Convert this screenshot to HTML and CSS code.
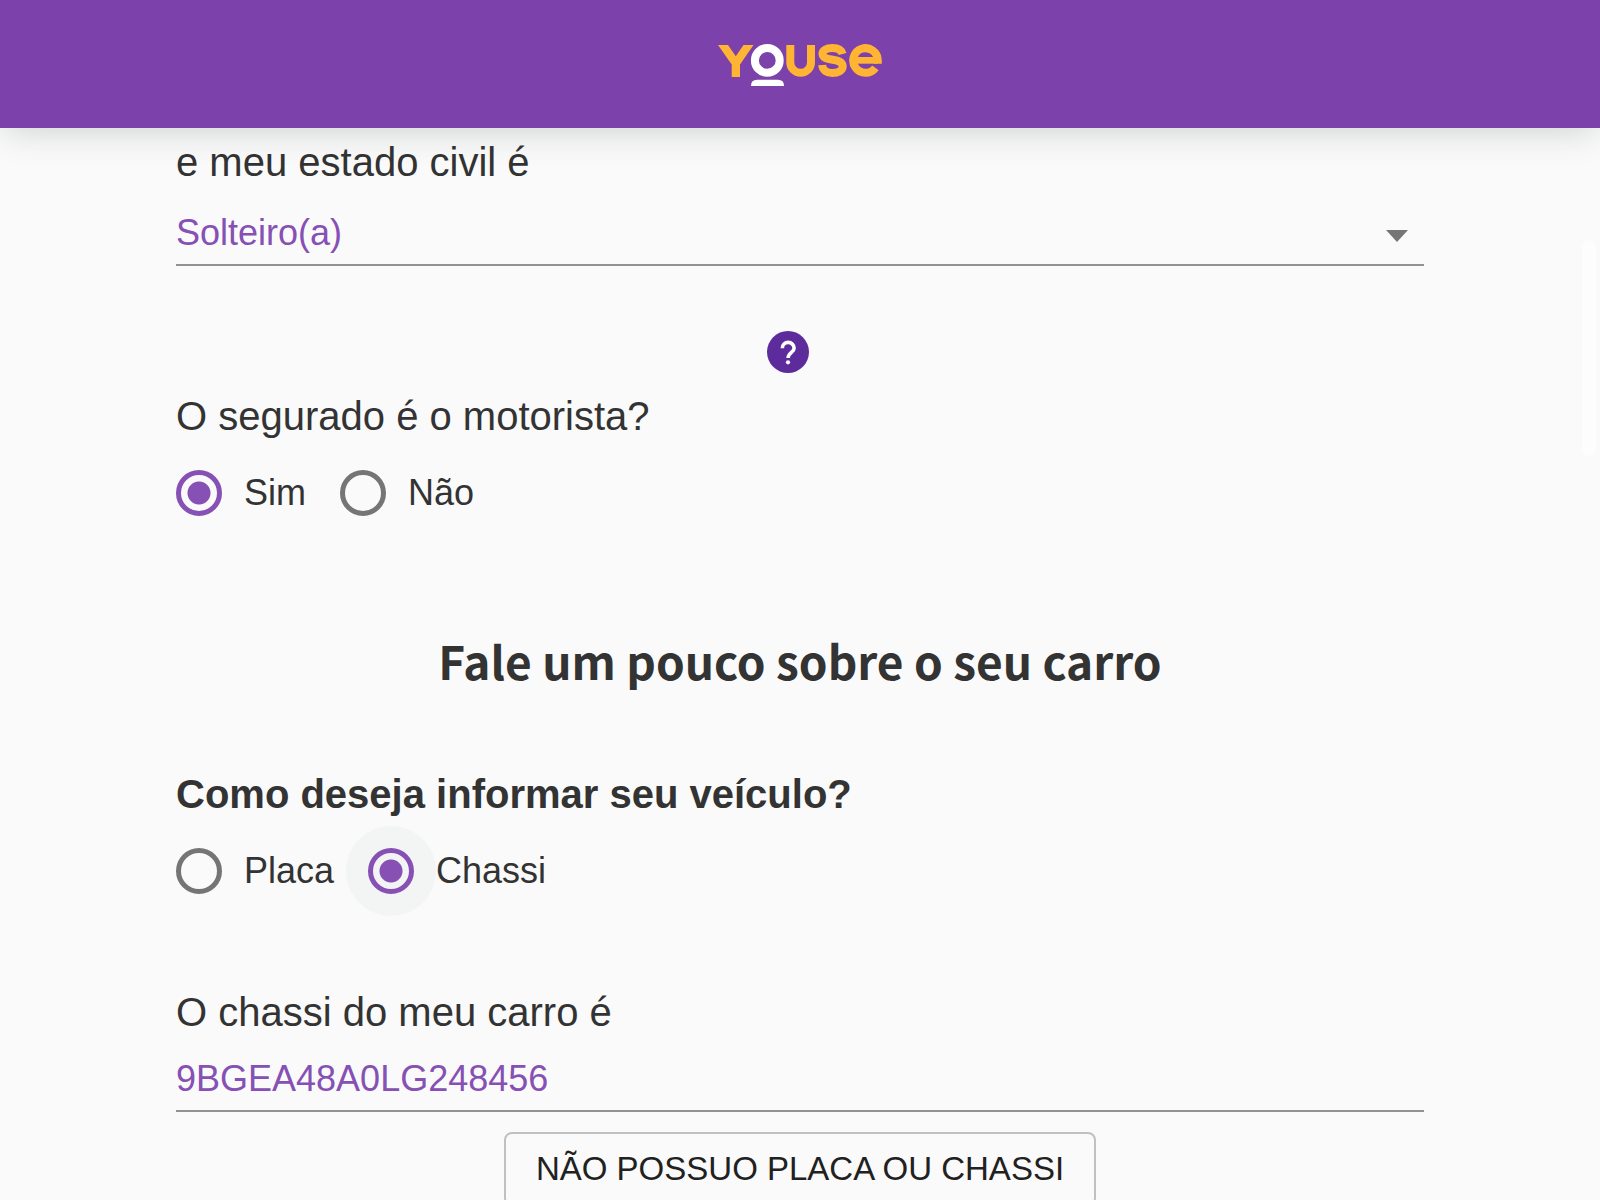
FILE: index.html
```html
<!DOCTYPE html>
<html lang="pt-BR">
<head>
<meta charset="utf-8">
<meta name="viewport" content="width=device-width, initial-scale=1">
<title>Youse</title>
<link rel="stylesheet" href="styles.css">
</head>
<body>
<div class="app">
  <header class="header">
    <svg class="logo" viewBox="0 0 164 44" role="img" aria-label="Youse">
      <path class="logo-fill" d="M0 2h10l7.8 11.2L25.5 2h10L22 21.5V34h-8.3V21.5z"/>
      <path class="logo-line" d="M72.3 2v17.4a10.35 10.35 0 0 0 20.7 0V2"/>
      <path class="logo-line" d="M124.600 11C123.500 7 119.500 5 114.500 5c-6.300 0-10 2.300-10 5.800 0 4.200 4.700 5 10.200 5.900 5.800.9 10 2.100 10 6.600 0 4.500-4.500 6.700-10.500 6.700-5.500 0-9.500-2.500-10-8"/>
      <path class="logo-line" d="M159.800 20.700V17.400A12.300 12.300 0 1 0 157.400 24.800"/>
      <path class="logo-fill" d="M138 14h22v6.700h-22z"/>
      <circle class="logo-ring" cx="49.300" cy="17.400" r="12.400"/>
      <path class="logo-base" d="M33 43q0-6.300 6-6.300h21q6 0 6 6.300z"/>
    </svg>
  </header>
  <main class="content">
    <form class="form">
      <label class="label" for="civil">e meu estado civil é</label>
      <div class="select-wrap">
        <select class="control" id="civil"><option>Solteiro(a)</option></select>
        <svg class="caret" viewBox="0 0 22 12" aria-hidden="true"><path d="M0 0h22L11 12z"/></svg>
      </div>
      <button class="help" type="button" aria-label="Ajuda">
        <svg viewBox="0 0 42 42" aria-hidden="true">
          <path d="M15.300 17.300a5.900 5.900 0 0 1 11.800 0C27.100 21.300 21.100 21.800 21.100 27"/>
          <circle cx="21" cy="31.300" r="2.100"/>
        </svg>
      </button>
      <fieldset class="group">
        <legend class="label">O segurado é o motorista?</legend>
        <div class="options">
          <label class="option"><input class="radio" type="radio" name="motorista" checked>Sim</label>
          <label class="option"><input class="radio" type="radio" name="motorista">Não</label>
        </div>
      </fieldset>
      <h2 class="title">Fale um pouco sobre o seu carro</h2>
      <fieldset class="group">
        <legend class="label label-strong">Como deseja informar seu veículo?</legend>
        <div class="options">
          <label class="option"><input class="radio" type="radio" name="veiculo">Placa</label>
          <label class="option"><input class="radio radio-active" type="radio" name="veiculo" checked>Chassi</label>
        </div>
      </fieldset>
      <div class="chassis">
        <label class="label" for="chassi">O chassi do meu carro é</label>
        <input class="control" id="chassi" type="text" value="9BGEA48A0LG248456">
      </div>
      <button class="alternative" type="button">NÃO POSSUO PLACA OU CHASSI</button>
    </form>
  </main>
  <div class="scroll-thumb" aria-hidden="true"></div>
</div>
</body>
</html>
```
FILE: styles.css
```css
* {
  box-sizing: border-box;
}

body {
  margin: 0;
  background: #fafafa;
  color: #333;
  font-family: "Liberation Sans", Arial, sans-serif;
}

.app {
  position: relative;
  display: flex;
  flex-direction: column;
  height: 100vh;
  overflow: hidden;
}

.header {
  position: relative;
  z-index: 1;
  display: flex;
  flex: none;
  justify-content: center;
  padding: 43px 0 41px;
  background: #7d41ab;
  box-shadow: 0 8px 32px -4px rgba(40, 60, 50, 0.2);
}

.logo {
  display: block;
  width: 164px;
  height: 44px;
}

.logo-fill {
  fill: #ffb434;
}

.logo-line {
  fill: none;
  stroke: #ffb434;
  stroke-width: 8;
}

.logo-ring {
  fill: none;
  stroke: #fff;
  stroke-width: 8;
}

.logo-base {
  fill: #fff;
}

.content {
  flex: 1;
  min-height: 0;
  padding: 11px 11% 48px;
  overflow-y: auto;
  scrollbar-width: none;
}

.form {
  display: flex;
  flex-direction: column;
}

.label {
  display: block;
  padding: 0;
  font-size: 40px;
  line-height: 46px;
}

.label-strong {
  font-weight: 700;
}

.select-wrap {
  position: relative;
  margin-top: 26px;
}

.control {
  display: block;
  width: 100%;
  height: 55px;
  margin: 0;
  padding: 0 0 10px;
  border: 0;
  border-bottom: 2px solid #929292;
  border-radius: 0;
  outline: 0;
  appearance: none;
  background: none;
  color: #8650b4;
  font-family: inherit;
  font-size: 36px;
  line-height: 42px;
}

.caret {
  position: absolute;
  top: 19px;
  right: 16px;
  width: 22px;
  height: 12px;
  fill: #757575;
  pointer-events: none;
}

.help {
  align-self: center;
  width: 42px;
  height: 42px;
  margin: 65px 24px 20px 0;
  padding: 0;
  border: 0;
  border-radius: 50%;
  background: #5e2b9c;
}

.help svg {
  display: block;
  fill: #fff;
}

.help path {
  fill: none;
  stroke: #fff;
  stroke-width: 3.6;
}

.group {
  min-width: 0;
  margin: 0;
  padding: 0;
  border: 0;
}

.options {
  display: flex;
  gap: 34px;
  margin-top: 31px;
}

.option {
  display: flex;
  align-items: center;
  gap: 22px;
  font-size: 36px;
  line-height: 46px;
}

.radio {
  flex: none;
  width: 46px;
  height: 46px;
  margin: 0;
  border: 5px solid #757575;
  border-radius: 50%;
  appearance: none;
}

.radio:checked {
  border-color: #8650b4;
  background: radial-gradient(circle, #8650b4 11px, transparent 12px);
}

.radio-active {
  box-shadow: 0 0 0 22px #f3f5f5;
}

.radio-active:checked {
  background: radial-gradient(circle, #8650b4 11px, #f3f5f5 12px);
}

.title {
  margin: 114px 0 81px;
  font-family: "Noto Sans CJK SC", "Noto Sans", sans-serif;
  font-size: 46px;
  font-weight: 700;
  line-height: 60px;
  text-align: center;
}

.chassis {
  margin-top: 95px;
}

.chassis .control {
  margin-top: 22px;
}

.alternative {
  align-self: center;
  margin-top: 20px;
  padding: 17px 30px;
  border: 2px solid #c0c0c0;
  border-radius: 8px;
  background: none;
  color: #212121;
  font-family: inherit;
  font-size: 33px;
  line-height: 36px;
}

.scroll-thumb {
  position: absolute;
  top: 20%;
  right: 4px;
  width: 14px;
  height: 18%;
  border-radius: 7px;
  background: #fdfdfd;
}
```
